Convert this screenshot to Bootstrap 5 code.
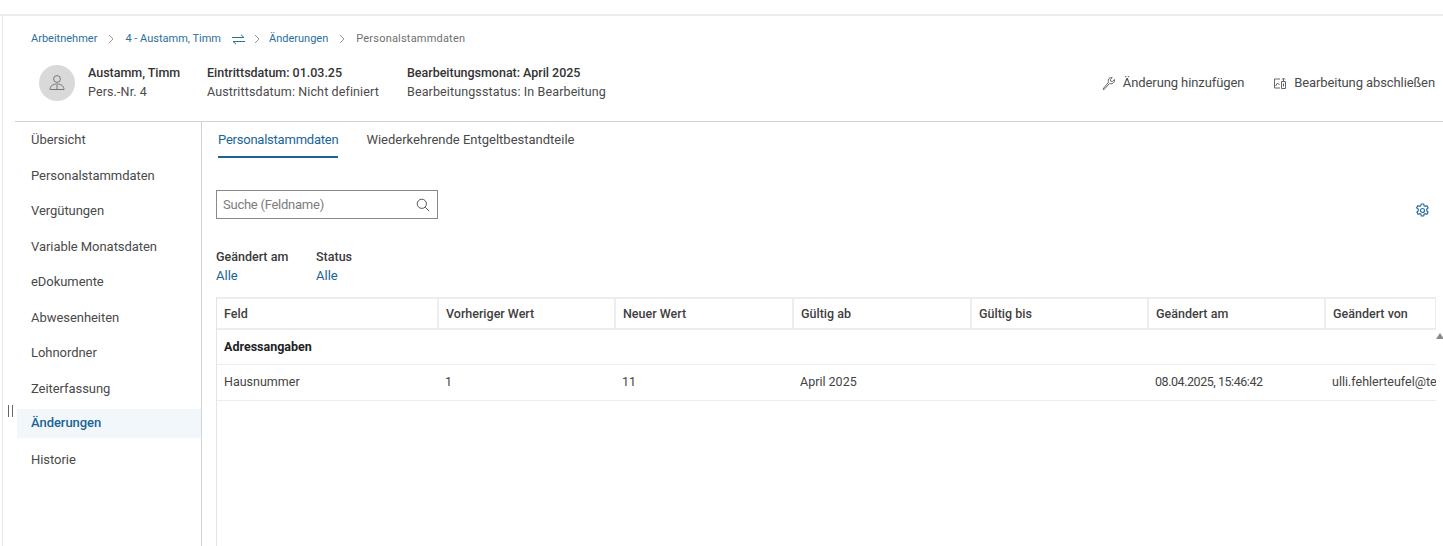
<!DOCTYPE html>
<html lang="de">
<head>
<meta charset="utf-8">
<title>Änderungen</title>
<link href="https://cdn.jsdelivr.net/npm/bootstrap@5.3.0/dist/css/bootstrap.min.css" rel="stylesheet">
<style>
html,body{height:546px;overflow:hidden;background:#fff}
body{font-family:"Roboto","Noto Sans",sans-serif;font-size:13px;color:#4a4a4a;line-height:18px;padding-top:14px}
.shell{height:532px;border-top:2px solid #ececec;margin:0;position:relative}
.shell-inner{height:530px;margin-left:2px;border-left:1px solid #e6e6e6;padding-left:12px;display:flex;flex-direction:column}
.crumbs{height:40px;padding:6px 0 0 16px;font-size:11px;line-height:18px;color:#6f6f6f;align-items:center;height:40px}
.crumbs a{color:#2a6f9e;text-decoration:none}
.crumbs .lastcrumb{letter-spacing:.2px}
.crumb-sep{width:28px;display:flex;justify-content:center}
.crumb-sep.tight{width:24px}
.swap{margin-left:11px}
.head{height:66px;padding:0 8px 0 24px;border-bottom:1px solid #d2d2d2;flex:none;align-items:flex-start}
.avatar{width:36px;height:36px;border-radius:50%;background:#d9d9d9;margin-top:9px;margin-right:13px;display:flex;align-items:center;justify-content:center}
.hblock{padding-top:7px;line-height:19px;font-size:12.5px;letter-spacing:.12px}
.hblock b{font-weight:500;color:#333;display:block;letter-spacing:-.02px}
.hb1{width:119px}
.hb2{width:200px}
.actions{padding-top:18px;gap:30px;font-size:13px;letter-spacing:-.1px}
.main{flex:1;min-height:0}
.side{width:187px;flex:none;border-right:1px solid #d2d2d2;padding-left:2px}
.side-item{display:block;height:35.5px;line-height:35px;padding-left:14px;color:#4a4a4a;text-decoration:none;font-size:13px;letter-spacing:-.05px}
.side-item.on{background:#f2f7fb;color:#1a6496;font-weight:500;height:29px;line-height:28px;margin:3px 0 3.5px}
.pane{flex:1;min-width:0;padding-left:14px;position:relative}
.tabs{height:36px;gap:28px;padding-left:2px;font-size:13px}
.tab{height:36px;line-height:35px;color:#4a4a4a;text-decoration:none}
.tab.on{color:#1a6496;border-bottom:2px solid #1a6496;letter-spacing:-.23px}
.tool{height:90px;padding-top:32px;padding-right:12px}
.searchbox{width:222px;height:29px;border:1px solid #8a8a8a;padding:0 7px 0 6px;color:#7c7c7c;letter-spacing:-.25px}
.filters{gap:26px;height:36px;line-height:18.5px}
.filters b{font-weight:500;color:#3a3a3a;display:block;font-size:12.5px}
.filters a{color:#1a6496;text-decoration:none}
.fcol{width:74px}
.gridwrap{margin-top:13px;width:1220px;height:262px;border-left:1px solid #e4e4e4;border-top:2px solid #ededed;overflow:hidden}
.dtable{table-layout:fixed;width:1219px;border-collapse:collapse;margin:0;font-size:12.5px}
.dtable th{height:30px;font-weight:500;color:#3f3f3f;padding:0 7px;border-right:2px solid #ededed;border-bottom:2px solid #ededed;white-space:nowrap;overflow:hidden}
.dtable td{padding:0 7px;color:#444;border-bottom:1px solid #ededed;white-space:nowrap;overflow:hidden;vertical-align:middle}
.dtable .grp td{height:35px;font-weight:700;color:#222}
.dtable .val td{height:36px}
.dtable .stamp{letter-spacing:-.45px}
.c1{width:221px}.c2{width:177px}.c3{width:178px}.c4{width:178px}.c5{width:177px}.c6{width:177px}.c7{width:111px}
.grip{position:absolute;left:8px;top:389px;width:5px;height:12px;border-left:1px solid #666;border-right:1px solid #666}
.arrow{position:absolute;right:-1px;top:317px;width:0;height:0;border-left:4px solid transparent;border-right:4px solid transparent;border-bottom:6px solid #8a8a8a}
.gear{position:absolute;right:13px;top:81px}
</style>
</head>
<body>
<div class="shell">
  <div class="shell-inner">
    <div class="crumbs d-flex">
      <a href="#">Arbeitnehmer</a>
      <span class="crumb-sep"><svg width="6" height="10" viewBox="0 0 6 10"><path d="M1 1l4 4-4 4" fill="none" stroke="#9a9a9a"/></svg></span>
      <a href="#">4 - Austamm, Timm</a>
      <svg class="swap" width="13" height="11" viewBox="0 0 13 11" fill="none" stroke="#2a6f9e"><path d="M0 3.500h12M9 .8l3 2.700M13 7.500H1M4 10.200L1 7.500"/></svg>
      <span class="crumb-sep tight"><svg width="6" height="10" viewBox="0 0 6 10"><path d="M1 1l4 4-4 4" fill="none" stroke="#9a9a9a"/></svg></span>
      <a href="#">Änderungen</a>
      <span class="crumb-sep"><svg width="6" height="10" viewBox="0 0 6 10"><path d="M1 1l4 4-4 4" fill="none" stroke="#9a9a9a"/></svg></span>
      <span class="lastcrumb">Personalstammdaten</span>
    </div>
    <div class="head d-flex">
      <div class="avatar"><svg width="18" height="18" viewBox="0 0 18 18" fill="none" stroke="#777"><circle cx="9" cy="5" r="3.400"/><path d="M2 15.500c0-3.500 3-5.500 7-5.500s7 2 7 5.500zM9 11v4.500"/></svg></div>
      <div class="hblock hb1"><b>Austamm, Timm</b>Pers.-Nr. 4</div>
      <div class="hblock hb2"><b>Eintrittsdatum: 01.03.25</b>Austrittsdatum: Nicht definiert</div>
      <div class="hblock"><b>Bearbeitungsmonat: April 2025</b>Bearbeitungsstatus: In Bearbeitung</div>
      <div class="actions d-flex ms-auto">
        <span class="d-flex align-items-center gap-2"><svg width="13" height="13" viewBox="0 0 13 13" fill="none" stroke="#666"><path d="M1 12l.8.8L7.500 6.500c1.800.6 3.500.1 4.400-1.200.6-.9.800-1.900.5-2.800L10.300 4.600 8.600 4 8.200 2.500 10.300.6C9.300.3 8 .5 7.200 1.300 6.200 2.300 6 3.800 6.500 5.200z"/></svg>Änderung hinzufügen</span>
        <span class="d-flex align-items-center gap-2"><svg width="12" height="13" viewBox="0 0 12 13" fill="none" stroke="#666"><path d="M6 2H.5v9H6M1.500 9l2-3 2 2M8 4.500h3.500v7H7.500v-7zM9.500 4.500V1M8 2.500l1.500-1.500 1.500 1.500M9.500 6.500v3"/></svg>Bearbeitung abschließen</span>
      </div>
    </div>
    <div class="main d-flex">
      <nav class="side">
        <a class="side-item" href="#">Übersicht</a>
        <a class="side-item" href="#">Personalstammdaten</a>
        <a class="side-item" href="#">Vergütungen</a>
        <a class="side-item" href="#">Variable Monatsdaten</a>
        <a class="side-item" href="#">eDokumente</a>
        <a class="side-item" href="#">Abwesenheiten</a>
        <a class="side-item" href="#">Lohnordner</a>
        <a class="side-item" href="#">Zeiterfassung</a>
        <a class="side-item on" href="#">Änderungen</a>
        <a class="side-item" href="#">Historie</a>
      </nav>
      <section class="pane">
        <div class="tabs d-flex">
          <a class="tab on" href="#">Personalstammdaten</a>
          <a class="tab" href="#">Wiederkehrende Entgeltbestandteile</a>
        </div>
        <div class="tool">
          <div class="searchbox d-flex align-items-center justify-content-between">
            <span>Suche (Feldname)</span>
            <svg width="14" height="14" viewBox="0 0 14 14" fill="none" stroke="#555"><circle cx="5.800" cy="5.800" r="4.600"/><path d="M9.200 9.200l4 4"/></svg>
          </div>
        </div>
        <svg class="gear" width="15" height="15" viewBox="0 0 15 15" fill="none" stroke="#2a6f9e" stroke-width="1.200"><circle cx="7.500" cy="7.500" r="2"/><path d="M6.300 1h2.400l.4 1.800 1.100.6 1.700-.6 1.200 2.100-1.300 1.200v1.800l1.300 1.200-1.200 2.100-1.700-.6-1.100.6-.4 1.800H6.300l-.4-1.800-1.100-.6-1.700.6-1.200-2.100 1.300-1.200V6.100L1.600 4.900l1.200-2.100 1.700.6 1.100-.6z"/></svg>
        <div class="filters d-flex">
          <div class="fcol"><b>Geändert am</b><a href="#">Alle</a></div>
          <div><b>Status</b><a href="#">Alle</a></div>
        </div>
        <div class="gridwrap">
          <table class="dtable">
            <colgroup><col class="c1"><col class="c2"><col class="c3"><col class="c4"><col class="c5"><col class="c6"><col class="c7"></colgroup>
            <thead><tr><th>Feld</th><th>Vorheriger Wert</th><th>Neuer Wert</th><th>Gültig ab</th><th>Gültig bis</th><th>Geändert am</th><th>Geändert von</th></tr></thead>
            <tbody>
              <tr class="grp"><td colspan="7">Adressangaben</td></tr>
              <tr class="val"><td>Hausnummer</td><td>1</td><td>11</td><td>April 2025</td><td></td><td class="stamp">08.04.2025, 15:46:42</td><td>ulli.fehlerteufel@test.de</td></tr>
            </tbody>
          </table>
        </div>
      </section>
    </div>
  </div>
  <span class="grip"></span>
  <span class="arrow"></span>
</div>
</body>
</html>
